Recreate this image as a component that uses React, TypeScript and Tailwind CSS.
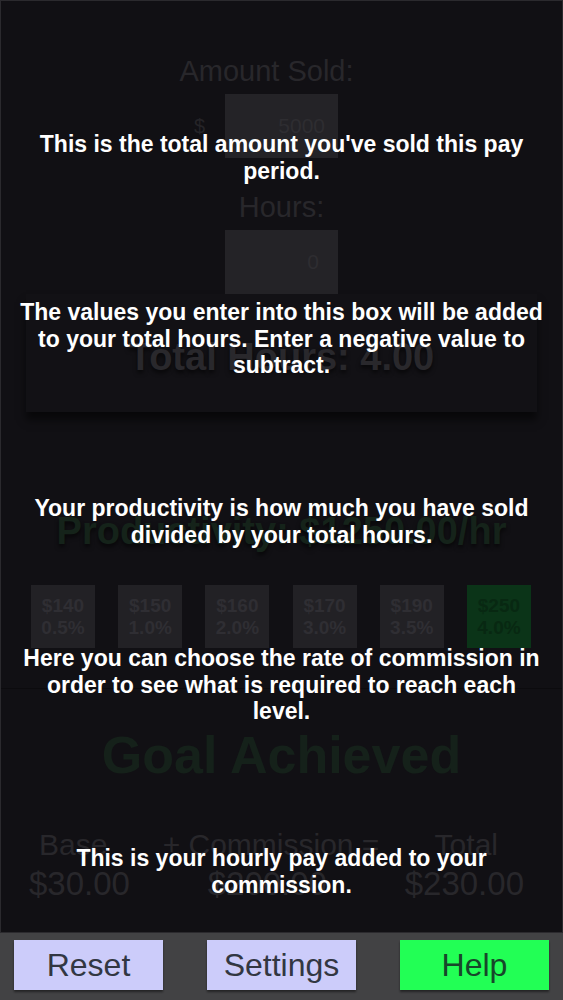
import React from "react";

const tiles = [
  { p: "$140", r: "0.5%" },
  { p: "$150", r: "1.0%" },
  { p: "$160", r: "2.0%" },
  { p: "$170", r: "3.0%" },
  { p: "$190", r: "3.5%" },
  { p: "$250", r: "4.0%", on: true },
];

const helps = [
  { top: "top-[131px]", text: "This is the total amount you've sold this pay period." },
  { top: "top-[299px]", text: "The values you enter into this box will be added to your total hours. Enter a negative value to subtract." },
  { top: "top-[495px]", text: "Your productivity is how much you have sold divided by your total hours." },
  { top: "top-[645px]", text: "Here you can choose the rate of commission in order to see what is required to reach each level." },
  { top: "top-[845px]", text: "This is your hourly pay added to your commission." },
];

export default function App() {
  return (
    <div className="relative w-full h-[1000px] bg-[#424244] flex flex-col font-['Liberation_Sans',Arial,sans-serif] overflow-hidden">
      {/* dimmed app content */}
      <div className="h-[933px] bg-[#111014] border border-[#2b2a2e] flex flex-col">
        <div className="pt-[54px] pr-[30px] text-center text-[29px] leading-[32px] text-[#28272b]">Amount Sold:</div>
        <div className="grid grid-cols-[1fr_113px_1fr] mt-[7px]">
          <div className="flex justify-end items-center pr-[20px] text-[20px] text-[#252428]">$</div>
          <div className="h-[64px] bg-[#242327] flex items-center justify-end pr-[13px] text-[21px] text-[#2e2d31]">5000</div>
          <div />
        </div>
        <div className="mt-[33px] text-center text-[29px] leading-[32px] text-[#28272b]">Hours:</div>
        <div className="mx-auto mt-[7px] w-[113px] h-[64px] bg-[#242327] flex items-center justify-end pr-[19px] text-[21px] text-[#2e2d31]">0</div>
        <div className="mx-[25px] h-[118px] bg-[#121115] shadow-[0_8px_8px_rgba(0,0,0,0.55)] flex items-center justify-center">
          <div className="text-[38px] font-bold text-[#29282c] [text-shadow:0_3px_4px_rgba(0,0,0,0.6)] mt-[8px]">Total Hours: 4.00</div>
        </div>
        <div className="mt-[97px] text-center text-[38px] leading-[44px] font-bold text-[#15231a] [text-shadow:0_3px_4px_rgba(0,0,0,0.6)]">Productivity: $1250.00/hr</div>
        <div className="mt-[32px] flex justify-between pl-[30px] pr-[31px]">
          {tiles.map((t) => (
            <div
              key={t.p}
              className={`w-[64px] h-[63px] flex flex-col items-center justify-center font-bold text-[19px] leading-[22px] ${t.on ? "bg-[#0b3418] text-[#082812]" : "bg-[#222125] text-[#2f2e33]"}`}
            >
              <span>{t.p}</span>
              <span>{t.r}</span>
            </div>
          ))}
        </div>
        <div className="mt-[40px] h-[1px] bg-[#0c0b0e]" />
        <div className="mt-[37px] text-center text-[52px] leading-[58px] font-bold text-[#15211a]">Goal Achieved</div>
        <div className="mt-[44px] flex justify-between pl-[38px] pr-[64px] text-[30px] leading-[34px] text-[#28272b]">
          <span>Base</span>
          <span>+ Commission =</span>
          <span>Total</span>
        </div>
        <div className="mt-[4px] flex justify-between pl-[28px] pr-[38px] text-[33px] leading-[36px] text-[#28272b]">
          <span>$30.00</span>
          <span>$200.00</span>
          <span>$230.00</span>
        </div>
      </div>
      {/* bottom bar */}
      <div className="flex-1 flex items-start justify-between px-[14px] pt-[7px]">
        <button className="w-[149px] h-[50px] bg-[#ccccfa] shadow-[0_2px_2px_rgba(0,0,0,0.45)] text-[32px] text-[#323742]">Reset</button>
        <button className="w-[149px] h-[50px] bg-[#ccccfa] shadow-[0_2px_2px_rgba(0,0,0,0.45)] text-[32px] text-[#323742]">Settings</button>
        <button className="w-[149px] h-[50px] bg-[#22ff55] shadow-[0_2px_2px_rgba(0,0,0,0.45)] text-[32px] text-[#17472a]">Help</button>
      </div>
      {/* help overlay texts */}
      <div className="absolute inset-x-0 top-0 h-[933px] pointer-events-none">
        {helps.map((h) => (
          <div
            key={h.text}
            className={`absolute left-[19px] right-[19px] ${h.top} text-center text-white font-bold text-[23px] leading-[26.5px]`}
          >
            {h.text}
          </div>
        ))}
      </div>
    </div>
  );
}
